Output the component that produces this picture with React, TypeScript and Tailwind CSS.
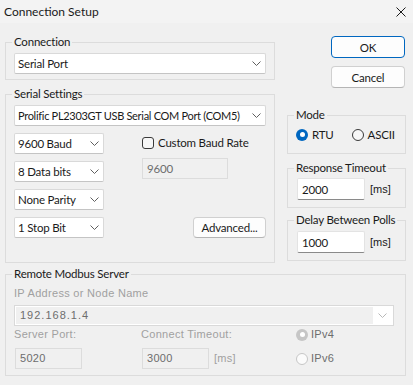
import { ReactNode } from "react";

function Chevron({ color = "#5f5f5f" }: { color?: string }) {
  return (
    <svg width="9" height="5" viewBox="0 0 9 5" className="shrink-0">
      <path d="M0.5 0.5 L4.5 4.5 L8.5 0.5" fill="none" stroke={color} strokeWidth="1" />
    </svg>
  );
}

function Combo({ value, width, textClass }: { value: string; width: string; textClass?: string }) {
  return (
    <div
      className={`${width} h-[21px] flex items-center justify-between bg-white border border-[#d9d9d9] border-b-[#c4c4c4] rounded-[2px] pl-[3px] pr-[4px] text-[#1a1a1a]`}
    >
      <span className={`whitespace-nowrap ${textClass ?? ""}`}>{value}</span>
      <Chevron />
    </div>
  );
}

function Group({
  title,
  className,
  children,
}: {
  title: string;
  className?: string;
  children: ReactNode;
}) {
  return (
    <fieldset className={`border border-[#dcdcdc] px-[8px] min-w-0 ${className ?? ""}`}>
      <legend className="-ml-[2px] px-[2px] leading-[16px] whitespace-nowrap text-[#1a1a1a]">{title}</legend>
      {children}
    </fieldset>
  );
}

function Radio({ checked, disabled }: { checked?: boolean; disabled?: boolean }) {
  if (checked) {
    return (
      <span
        className={`w-[12px] h-[12px] rounded-full flex items-center justify-center shrink-0 ${
          disabled ? "bg-[#c6c6c6]" : "bg-[#0067c0]"
        }`}
      >
        <span className="w-[5px] h-[5px] rounded-full bg-white" />
      </span>
    );
  }
  return (
    <span
      className={`block w-[12px] h-[12px] rounded-full border shrink-0 ${
        disabled ? "border-[#c6c6c6] bg-[#fbfbfb]" : "border-[#3a3a3a] bg-[#f7f7f7]"
      }`}
    />
  );
}

function Edit({ value }: { value: string }) {
  return (
    <div className="w-[68px] h-[22px] flex items-center bg-white border border-[#e3e3e3] border-b-[#8a8a8a] rounded-[2px] pl-[4px] text-[#1a1a1a]">
      {value}
    </div>
  );
}

function DisabledEdit({ value, width }: { value: string; width: string }) {
  return (
    <div className={`${width} h-[21px] flex items-center border border-[#dcdcdc] pl-[4px] text-[#6d6d6d]`}>
      {value}
    </div>
  );
}

export default function App() {
  return (
    <div className="w-[413px] h-[385px] bg-[#f0f0f0] font-['Lato',sans-serif] text-[11.5px] tracking-[-0.2px] leading-[15px] text-[#1a1a1a] overflow-hidden">
      {/* title bar */}
      <div className="h-[23px] bg-[#f3f3f3] flex items-center justify-between pl-[4px] pr-[7px]">
        <span className="text-[12px] tracking-normal">Connection Setup</span>
        <svg width="10" height="10" viewBox="0 0 10 10">
          <path d="M0.5 0.5 L9.5 9.5 M9.5 0.5 L0.5 9.5" stroke="#1a1a1a" strokeWidth="1" />
        </svg>
      </div>

      <div className="pl-[5px] pr-[7px] pt-[11px]">
        <div className="flex gap-[12px]">
          {/* left column */}
          <div className="w-[270px] flex flex-col gap-[6px]">
            <Group title="Connection" className="pt-[3px] pb-[5px]">
              <Combo value="Serial Port" width="w-[252px]" />
            </Group>

            <Group title="Serial Settings" className="pt-[3px] pb-[24px]">
              <Combo
                value="Prolific PL2303GT USB Serial COM Port (COM5)"
                width="w-[252px]"
                textClass="text-[11px] tracking-[-0.3px]"
              />
              <div className="flex mt-[7px]">
                <div className="flex flex-col gap-[7px]">
                  <Combo value="9600 Baud" width="w-[90px]" />
                  <Combo value="8 Data bits" width="w-[90px]" />
                  <Combo value="None Parity" width="w-[90px]" />
                  <Combo value="1 Stop Bit" width="w-[90px]" />
                </div>
                <div className="flex-1 ml-[38px] flex flex-col">
                  <label className="flex items-center gap-[4px] mt-[2px] h-[15px]">
                    <span className="w-[12px] h-[12px] rounded-[3px] border border-[#3a3a3a] bg-[#f7f7f7]" />
                    <span>Custom Baud Rate</span>
                  </label>
                  <div className="mt-[8px]">
                    <DisabledEdit value="9600" width="w-[86px]" />
                  </div>
                  <button className="mt-auto self-end w-[73px] h-[21px] bg-[#fdfdfd] border border-[#d0d0d0] border-b-[#b5b5b5] rounded-[4px] flex items-center justify-center">
                    Advanced...
                  </button>
                </div>
              </div>
            </Group>
          </div>

          {/* right column */}
          <div className="w-[119px] flex flex-col">
            <div className="flex flex-col items-end gap-[8px] mt-[2px] pr-[1px]">
              <button className="w-[74px] h-[22px] bg-[#fdfdfd] border border-[#0067c0] rounded-[4px] flex items-center justify-center">
                OK
              </button>
              <button className="w-[74px] h-[22px] bg-[#fdfdfd] border border-[#d0d0d0] border-b-[#b5b5b5] rounded-[4px] flex items-center justify-center">
                Cancel
              </button>
            </div>

            <Group title="Mode" className="mt-[19px] pt-[4px] pb-[11px]">
              <div className="flex items-center h-[15px]">
                <Radio checked />
                <span className="ml-[4px]">RTU</span>
                <span className="ml-[18px] flex">
                  <Radio />
                </span>
                <span className="ml-[4px]">ASCII</span>
              </div>
            </Group>

            <Group title="Response Timeout" className="mt-[6px] pt-[2px] pb-[7px]">
              <div className="flex items-center gap-[5px] pl-[1px]">
                <Edit value="2000" />
                <span className="font-['Liberation_Sans',sans-serif] text-[11px] tracking-normal">[ms]</span>
              </div>
            </Group>

            <Group title="Delay Between Polls" className="mt-[4px] pt-[3px] pb-[7px]">
              <div className="flex items-center gap-[5px] pl-[1px]">
                <Edit value="1000" />
                <span className="font-['Liberation_Sans',sans-serif] text-[11px] tracking-normal">[ms]</span>
              </div>
            </Group>
          </div>
        </div>

        {/* remote server */}
        <Group title="Remote Modbus Server" className="mt-[3px] pt-[4px] pb-[6px]">
          <div className="font-['Liberation_Sans',sans-serif] text-[11px] text-[#a0a0a0] tracking-[0.3px]">
            <div className="h-[15px] flex items-center">IP Address or Node Name</div>
            <div className="mt-[4px] w-[380px] h-[21px] flex items-stretch border border-[#d9d9d9] bg-white p-px">
              <div className="flex-1 bg-[#f0f0f0] flex items-center pl-[4px] text-[#6d6d6d] tracking-[1px]">
                192.168.1.4
              </div>
              <div className="w-[19px] flex items-center justify-center">
                <Chevron color="#b8b8b8" />
              </div>
            </div>
            <div className="mt-[1px] grid grid-cols-[127px_155px_auto] grid-rows-[15px_21px] gap-y-[6px] items-center">
              <div>Server Port:</div>
              <div>Connect Timeout:</div>
              <div className="flex items-center gap-[3px]">
                <Radio checked disabled />
                <span className="text-[#6d6d6d]">IPv4</span>
              </div>
              <div className="pl-[1px]">
                <DisabledEdit value="5020" width="w-[67px]" />
              </div>
              <div className="flex items-center gap-[5px] pl-[1px]">
                <DisabledEdit value="3000" width="w-[67px]" />
                <span>[ms]</span>
              </div>
              <div className="flex items-center gap-[3px]">
                <Radio disabled />
                <span className="text-[#6d6d6d]">IPv6</span>
              </div>
            </div>
          </div>
        </Group>
      </div>
    </div>
  );
}
